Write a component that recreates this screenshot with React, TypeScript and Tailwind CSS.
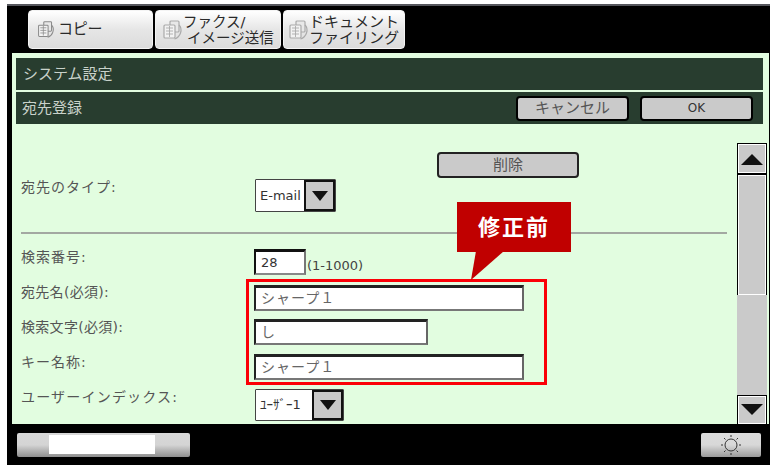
const jp = "font-['DejaVu_Sans','Noto_Sans_CJK_JP',sans-serif]";

function DocIcon({ color = "#8a8a8a", size = 22 }: { color?: string; size?: number }) {
  return (
    <svg width={size} height={size} viewBox="0 0 22 22" fill="none" stroke={color} strokeWidth="1.2" className="shrink-0">
      <rect x="9" y="2" width="9" height="11" rx="1" fill="#e8e8e8" />
      <rect x="3" y="6" width="11" height="13" rx="1" fill="#f2f2f2" />
      <path d="M5 9h7M5 12h7M5 15h7M8.500 7v11" strokeWidth="0.9" />
      <path d="M18 6c2 2 2.500 5 1.500 8-1 3-3 5-6 6" />
    </svg>
  );
}

function Tab({ w, mr, children }: { w: string; mr: string; children: React.ReactNode }) {
  return (
    <div className={`${w} ${mr} h-[39px] rounded-[4px] border border-[#f4f4f4] bg-gradient-to-b from-[#ffffff] via-[#e6e6e6] to-[#dcdcdc] flex items-center text-[#2a2a2a] shrink-0`}>
      {children}
    </div>
  );
}

function Field({ w, text }: { w: string; text: string }) {
  return (
    <div className={`${w} h-[26px] bg-white border-[2px] border-t-[3px] border-[#222] border-r-[#666] border-b-[#777] flex items-center pl-[5px] text-[14px] text-[#666] tracking-[1px]`}>
      {text}
    </div>
  );
}

function Arrow({ up }: { up?: boolean }) {
  return (
    <svg width="22" height="12" viewBox="0 0 22 12">
      <path d={up ? "M0 12 L11 1 L22 12Z" : "M0 0 L22 0 L11 11Z"} fill="#111" />
    </svg>
  );
}

function Select({ w, h, label, cls }: { w: string; h: string; label: string; cls: string }) {
  return (
    <div className={`${w} ${h} ml-[1px] flex bg-white border border-[#444] rounded-[1px]`}>
      <div className={`flex-1 flex items-center pl-[4px] text-[#333] ${cls}`}>{label}</div>
      <div className="w-[31px] border-2 border-[#111] bg-[#c9c9c9] flex items-center justify-center">
        <svg width="16" height="10" viewBox="0 0 16 10"><path d="M0 0H16L8 10Z" fill="#111" /></svg>
      </div>
    </div>
  );
}

function Label({ children, cls = "tracking-[1px]" }: { children: React.ReactNode; cls?: string }) {
  return <div className={`w-[242px] pl-[9px] text-[14px] leading-[16px] text-[#555] shrink-0 ${cls}`}>{children}</div>;
}

export default function App() {
  return (
    <div className={`relative w-[774px] h-[474px] bg-white pt-[4px] pl-[7px] overflow-hidden ${jp}`}>
      <div className="w-[763px] h-[461px] bg-black border-t-2 border-[#55565c] flex flex-col">
        {/* tabs */}
        <div className="h-[47px] pl-[21px] pt-[4px] flex items-start shrink-0">
          <Tab w="w-[125px]" mr="mr-[2px]">
            <div className="ml-[7px] mr-[3px]"><DocIcon size={19} /></div>
            <span className="text-[15px] tracking-[-0.3px]">コピー</span>
          </Tab>
          <Tab w="w-[126px]" mr="mr-[2px]">
            <div className="ml-[5px]"><DocIcon size={22} color="#aaa" /></div>
            <div className="text-[14.500px] leading-[16px] whitespace-nowrap">
              <div>ファクス/</div>
              <div className="ml-[4px]">イメージ送信</div>
            </div>
          </Tab>
          <Tab w="w-[122px]" mr="mr-0">
            <div className="ml-[3px]"><DocIcon size={22} color="#aaa" /></div>
            <div className="text-[15px] leading-[16px] whitespace-nowrap">
              <div>ドキュメント</div>
              <div>ファイリング</div>
            </div>
          </Tab>
        </div>
        {/* panel */}
        <div className="flex-1 ml-[5px] mr-[1px] bg-[#e2fde0] flex flex-col min-h-0">
          <div className="h-[371px] flex flex-col shrink-0 relative">
            <div className="mx-[4px] mt-[5px] mr-[6px] h-[32px] bg-[#283d2f] flex items-center pl-[7px] text-[15px] text-[#c9d2ca]">システム設定</div>
            <div className="mx-[4px] mt-[2px] mr-[6px] h-[32px] bg-[#283d2f] flex items-center pl-[6px] text-[15px] text-[#c9d2ca]">
              <span className="flex-1">宛先登録</span>
              <div className="w-[113px] h-[25px] mr-[11px] bg-[#cacaca] border-2 border-black rounded-[4px] flex items-center justify-center text-[15px] text-[#555]">キャンセル</div>
              <div className="w-[113px] h-[25px] mr-[10px] bg-[#cacaca] border-2 border-black rounded-[4px] flex items-center justify-center text-[12px] text-[#333]">OK</div>
            </div>
            <div className="flex-1 flex min-h-0">
              <div className="w-[725px] shrink-0">
                <div className="mt-[28px] ml-[425px] w-[142px] h-[26px] bg-[#cacaca] border-2 border-[#222] rounded-[4px] flex items-center justify-center text-[15px] text-[#555]">削除</div>
                <div className="mt-px flex items-start">
                  <Label>宛先のタイプ:</Label>
                  <Select w="w-[81px]" h="h-[33px]" label="E-mail" cls="text-[13px]" />
                </div>
                <div className="mt-[20px] ml-[9px] w-[706px] h-[2px] bg-[#a3a8a2]" />
                <div className="mt-[15px] flex items-start">
                  <Label>検索番号:</Label>
                  <div className="w-[52px] h-[26px] bg-white border-[2px] border-t-[3px] border-[#111] border-r-[#777] border-b-[#888] flex items-center pl-[5px] text-[13px] text-[#333]">28</div>
                  <span className="mt-[8px] ml-px text-[13px] leading-[18px] text-[#444]">(1-1000)</span>
                </div>
                <div className="mt-[10px] flex items-start">
                  <Label cls="-mt-px tracking-[0.3px]">宛先名(必須):</Label>
                  <Field w="w-[270px]" text="シャープ１" />
                </div>
                <div className="mt-[8px] flex items-start">
                  <Label cls="tracking-[0.3px]">検索文字(必須):</Label>
                  <Field w="w-[174px]" text="し" />
                </div>
                <div className="mt-[9px] flex items-start">
                  <Label>キー名称:</Label>
                  <Field w="w-[270px]" text="シャープ１" />
                </div>
                <div className="mt-[9px] flex items-start">
                  <Label cls="tracking-[1.2px]">ユーザーインデックス:</Label>
                  <Select w="w-[89px]" h="h-[32px]" label="ﾕｰｻﾞｰ1" cls="text-[13px]" />
                </div>
              </div>
              {/* scrollbar */}
              <div className="mt-[19px] w-[30px] flex flex-col shrink-0 bg-black">
                <div className="h-[29px] bg-[#cacaca] border border-white m-px mb-[2px] flex items-center justify-center"><Arrow up /></div>
                <div className="h-[120px] bg-[#cacaca] border border-white mx-px" />
                <div className="flex-1 bg-[#cacaca]" />
                <div className="h-[28px] bg-[#cacaca] border border-white m-px mb-0 flex items-center justify-center"><Arrow /></div>
              </div>
            </div>
          </div>
          {/* footer */}
          <div className="flex-1 bg-black flex items-start justify-between pt-[9px] -ml-[5px] -mr-px pl-[10px] pr-[9px]">
            <div className="w-[173px] h-[24px] rounded-[2px] bg-gradient-to-b from-[#d8d8d8] via-[#d4d4d4] to-[#8f8f8f] flex items-start pl-[32px]">
              <div className="w-[106px] h-[19px] mt-[2px] bg-white" />
            </div>
            <div className="w-[60px] h-[24px] rounded-[2px] bg-gradient-to-b from-[#dcdcdc] via-[#d8d8d8] to-[#9a9a9a] flex items-center justify-center">
              <svg width="22" height="22" viewBox="0 0 22 22" fill="none" stroke="#333" strokeWidth="1">
                <circle cx="11" cy="11" r="6" />
                <path d="M11 1v2M11 19v2M1 11h2M19 11h2M4 4l1.5 1.5M16.5 16.5L18 18M4 18l1.5-1.5M16.500 5.500L18 4" />
              </svg>
            </div>
          </div>
        </div>
      </div>

      {/* red highlight overlay */}
      <div className="absolute left-[246px] top-[279px] w-[301px] h-[106px] border-[3px] border-[#fb0007] pointer-events-none" />
      {/* callout */}
      <div className="absolute left-[457px] top-[202px] w-[114px] h-[50px] bg-[#c00000] flex items-center justify-center text-white font-bold text-[22px] tracking-[2px]">修正前</div>
      <svg className="absolute left-[468px] top-[251px]" width="40" height="30" viewBox="0 0 40 30">
        <path d="M8 0H36L3 29Z" fill="#c00000" />
      </svg>
    </div>
  );
}
